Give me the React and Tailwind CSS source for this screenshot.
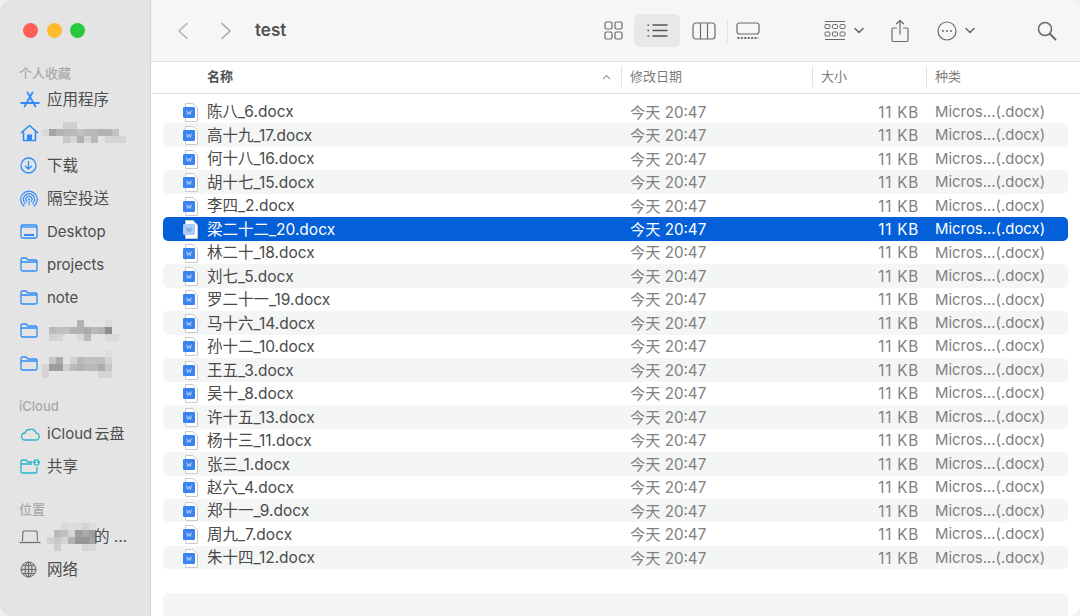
const FONT = "font-['Inter','Noto_Sans_CJK_SC',sans-serif]";

const files = [
  "陈八_6.docx", "高十九_17.docx", "何十八_16.docx", "胡十七_15.docx", "李四_2.docx",
  "梁二十二_20.docx", "林二十_18.docx", "刘七_5.docx", "罗二十一_19.docx", "马十六_14.docx",
  "孙十二_10.docx", "王五_3.docx", "吴十_8.docx", "许十五_13.docx", "杨十三_11.docx",
  "张三_1.docx", "赵六_4.docx", "郑十一_9.docx", "周九_7.docx", "朱十四_12.docx",
];

function FolderIcon() {
  return (
    <svg width="18" height="15" viewBox="0 0 18 15" fill="none" stroke="#2f8cf7" strokeWidth="1.3">
      <path d="M1 3.5 V2.5 A1.5 1.5 0 0 1 2.5 1 H6 L8 3 H15.5 A1.5 1.5 0 0 1 17 4.5 V12.5 A1.5 1.5 0 0 1 15.5 14 H2.5 A1.5 1.5 0 0 1 1 12.5 Z M1 5 H17" />
    </svg>
  );
}

// redacted names in the sidebar, [col, row, opacity] on a 7px grid
function Mosaic({ cells, w, h, className = "" }) {
  return (
    <svg className={className} width={w} height={h} viewBox={`0 0 ${w} ${h}`}>
      {cells.map(([x, y, o], i) => (
        <rect key={i} x={x * 7} y={y * 7} width="7" height="7" fill="#555" opacity={o} />
      ))}
    </svg>
  );
}

const mosaicHome = [
  [3,0,.15],[4,0,.15],
  [0,1,.08],[1,1,.45],[2,1,.35],[3,1,.3],[4,1,.3],[5,1,.25],[6,1,.3],[7,1,.3],[8,1,.35],[9,1,.35],[10,1,.25],
  [3,2,.2],[4,2,.1],[5,2,.35],[6,2,.1],[7,2,.3],[9,2,.1],[10,2,.12],[11,2,.1],
];
const mosaicFolderA = [
  [5,0,.35],[9,0,.06],
  [1,1,.3],[2,1,.25],[3,1,.25],[4,1,.35],[5,1,.35],[6,1,.4],[7,1,.3],[8,1,.35],[9,1,.6],
  [1,2,.12],[2,2,.1],[5,2,.08],[6,2,.3],[9,2,.08],[10,2,.08],
];
const mosaicFolderB = [
  [9,0,.04],
  [1,1,.2],[2,1,.4],[4,1,.12],[5,1,.3],[6,1,.25],[7,1,.25],[8,1,.25],[9,1,.12],
  [0,2,.1],[1,2,.5],[2,2,.5],[3,2,.15],[4,2,.3],[5,2,.35],[6,2,.3],[7,2,.3],[8,2,.4],[9,2,.2],
  [0,3,.1],[8,3,.1],[9,3,.1],
];
const mosaicLaptop = [
  [2,0,.08],[3,0,.05],[4,0,.05],[5,0,.12],[6,0,.05],
  [1,1,.3],[2,1,.25],[3,1,.1],[4,1,.5],[5,1,.4],[6,1,.5],
  [0,2,.12],[1,2,.2],[2,2,.1],[3,2,.35],[4,2,.55],[5,2,.55],[6,2,.45],
  [1,3,.15],[5,3,.1],[6,3,.08],
];

const Icons = {
  apps: (
    <svg width="20" height="17" viewBox="0 0 20 17" fill="none" stroke="#2f8cf7" strokeWidth="1.8" strokeLinecap="round">
      <path d="M7.5 1.5 L15.5 15.5 M12.5 1.5 L4.5 15.5 M1.2 12 H18.8" />
    </svg>
  ),
  home: (
    <svg width="19" height="18" viewBox="0 0 19 18" fill="none" stroke="#2f8cf7" strokeWidth="1.6" strokeLinejoin="round">
      <path d="M1 9 L9.5 1.5 L18 9 M3.5 7.5 V16.5 H15.5 V7.5" />
      <rect x="7" y="10.5" width="5" height="6" fill="#2f8cf7" stroke="none" />
    </svg>
  ),
  download: (
    <svg width="17" height="17" viewBox="0 0 17 17" fill="none" stroke="#2f8cf7" strokeWidth="1.3" strokeLinecap="round">
      <circle cx="8.5" cy="8.5" r="7.5" />
      <path d="M8.5 4.5 V12 M5.5 9.2 L8.5 12 L11.5 9.2" />
    </svg>
  ),
  airdrop: (
    <svg width="18" height="18" viewBox="0 0 18 18" fill="none" stroke="#2f8cf7" strokeWidth="1.2" strokeLinecap="round">
      <path d="M4 16 A8.3 8.3 0 1 1 14 16 M5.4 13.6 A5.6 5.6 0 1 1 12.6 13.6 M6.8 11.4 A3 3 0 1 1 11.2 11.4" />
      <circle cx="9" cy="9.3" r="1" fill="#2f8cf7" stroke="none" />
      <path d="M9 11 V15" strokeWidth="1" />
    </svg>
  ),
  desktop: (
    <svg width="18" height="15" viewBox="0 0 18 15" fill="none" stroke="#2f8cf7" strokeWidth="1.3">
      <rect x="1" y="1" width="16" height="13" rx="1.5" />
      <path d="M1 3 H17" />
      <path d="M4 11 H14" strokeWidth="2" />
    </svg>
  ),
  cloud: (
    <svg width="20" height="14" viewBox="0 0 20 14" fill="none" stroke="#25b5c9" strokeWidth="1.3">
      <path d="M5 13 H15.5 A3.5 3.5 0 0 0 16 6 A4.5 4.5 0 0 0 10 2.5 A5 5 0 0 0 5 6 A3.5 3.5 0 0 0 5 13 Z" />
    </svg>
  ),
  shared: (
    <svg width="20" height="15" viewBox="0 0 20 15" fill="none" stroke="#25b5c9" strokeWidth="1.3">
      <path d="M1 3 V2.5 A1.5 1.5 0 0 1 2.5 1 H6 L8 3 H12.5 M17 8 V12.5 A1.5 1.5 0 0 1 15.5 14 H2.5 A1.5 1.5 0 0 1 1 12.5 V3 M1 5 H12" />
      <circle cx="16.5" cy="3.5" r="3.2" fill="#25b5c9" stroke="none" />
      <circle cx="16.5" cy="2.6" r="1" fill="#fff" stroke="none" />
      <rect x="15" y="4" width="3" height="1.3" fill="#fff" stroke="none" />
    </svg>
  ),
  laptop: (
    <svg width="22" height="14" viewBox="0 0 22 14" fill="none" stroke="#6f6f6f" strokeWidth="1.1">
      <path d="M3.5 11 L4 1.5 A.7 .7 0 0 1 4.7 1 H17.3 A.7 .7 0 0 1 18 1.5 L18.5 11" />
      <path d="M.5 12.5 H21.5" strokeWidth="1.3" />
    </svg>
  ),
  globe: (
    <svg width="17" height="17" viewBox="0 0 17 17" fill="#9a9a9a" stroke="#6a6a6a" strokeWidth="1">
      <circle cx="8.5" cy="8.5" r="7.5" fillOpacity="0.3" />
      <ellipse cx="8.5" cy="8.5" rx="3.5" ry="7.5" fill="none" />
      <path d="M1 8.5 H16 M2.5 4.5 H14.5 M2.5 12.5 H14.5 M8.5 1 V16" fill="none" />
    </svg>
  ),
};

function SideItem({ icon, label, children, className = "" }) {
  const latin = /^[a-zA-Z]/.test(label || "");
  return (
    <div className={`flex h-[33px] items-center pl-[20px] ${className}`}>
      <span className="flex w-[27px] shrink-0 items-center">{icon}</span>
      {label && (
        <span className={`${latin ? "text-[15px]" : "text-[15.5px]"} leading-none text-[#4d4d4d] [word-spacing:-2px]`}>
          {label}
        </span>
      )}
      {children}
    </div>
  );
}

function SideTitle({ children, className = "" }) {
  return <div className={`pl-[19px] text-[13px] font-medium leading-none text-[#a9a9a9] ${className}`}>{children}</div>;
}

function Sidebar() {
  return (
    <aside className="flex h-full w-[151px] shrink-0 flex-col rounded-l-[11px] border-r border-[#d4d4d4] bg-[#e4e4e4]">
      <div className="flex gap-[8.5px] pl-[23px] pt-[23px]">
        <span className="size-[15px] rounded-full bg-[#fe5f57]" />
        <span className="size-[15px] rounded-full bg-[#febb2e]" />
        <span className="size-[15px] rounded-full bg-[#29c83f]" />
      </div>
      <SideTitle className="mt-[29px]">个人收藏</SideTitle>
      <div className="mt-[3px]">
        <SideItem icon={Icons.apps} label="应用程序" />
        <SideItem icon={Icons.home}>
          <Mosaic className="-ml-[5px]" cells={mosaicHome} w={84} h={21} />
        </SideItem>
        <SideItem icon={Icons.download} label="下载" />
        <SideItem icon={Icons.airdrop} label="隔空投送" />
        <SideItem icon={Icons.desktop} label="Desktop" />
        <SideItem icon={<FolderIcon />} label="projects" />
        <SideItem icon={<FolderIcon />} label="note" />
        <SideItem icon={<FolderIcon />}>
          <Mosaic className="-ml-[5px]" cells={mosaicFolderA} w={84} h={21} />
        </SideItem>
        <SideItem icon={<FolderIcon />}>
          <Mosaic className="-ml-[5px]" cells={mosaicFolderB} w={84} h={28} />
        </SideItem>
      </div>
      <SideTitle className="mt-[20px]">iCloud</SideTitle>
      <div className="mt-[4px]">
        <SideItem icon={Icons.cloud} label="iCloud 云盘" />
        <SideItem icon={Icons.shared} label="共享" />
      </div>
      <SideTitle className="mt-[20px]">位置</SideTitle>
      <div className="mt-[4px]">
        <SideItem icon={Icons.laptop} className="!pl-[19px]">
          <Mosaic cells={mosaicLaptop} w={49} h={28} className="ml-px" />
          <span className="-ml-[2px] text-[15.5px] leading-none text-[#4d4d4d]">的 ...</span>
        </SideItem>
        <SideItem icon={Icons.globe} label="网络" />
      </div>
    </aside>
  );
}

function Toolbar() {
  return (
    <div className="flex h-[62px] shrink-0 items-center border-b border-[#dfdfdf] bg-[#f6f6f6]">
      <svg className="ml-[26px]" width="12" height="18" viewBox="0 0 12 18" fill="none" stroke="#b4b4b4" strokeWidth="1.6" strokeLinecap="round" strokeLinejoin="round">
        <path d="M10 1.5 L2 9 L10 16.5" />
      </svg>
      <svg className="ml-[31px]" width="12" height="18" viewBox="0 0 12 18" fill="none" stroke="#a8a8a8" strokeWidth="1.6" strokeLinecap="round" strokeLinejoin="round">
        <path d="M2 1.5 L10 9 L2 16.5" />
      </svg>
      <span className="ml-[23px] text-[17px] font-semibold leading-none text-[#515151]">test</span>

      <div className="ml-[318px] flex items-center">
        <svg width="19" height="19" viewBox="0 0 19 19" fill="none" stroke="#6a6a6a" strokeWidth="1.2">
          <rect x="1" y="1" width="7" height="7" rx="1.5" />
          <rect x="11" y="1" width="7" height="7" rx="1.5" />
          <rect x="1" y="11" width="7" height="7" rx="1.5" />
          <rect x="11" y="11" width="7" height="7" rx="1.5" />
        </svg>
        <div className="ml-[11px] flex h-[33px] w-[46px] items-center justify-center rounded-[6px] bg-[#e8e8e8]">
          <svg width="21" height="15" viewBox="0 0 21 15" fill="none" stroke="#555" strokeWidth="1.4" strokeLinecap="round">
            <path d="M1 2 H1.5 M1 7.5 H1.5 M1 13 H1.5 M6 2 H20 M6 7.5 H20 M6 13 H20" />
          </svg>
        </div>
        <svg className="ml-[12px]" width="24" height="18" viewBox="0 0 24 18" fill="none" stroke="#6a6a6a" strokeWidth="1.2">
          <rect x="1" y="1" width="22" height="16" rx="3" />
          <path d="M8.5 1 V17 M15.5 1 V17" />
        </svg>
        <span className="ml-[11px] h-[24px] w-px bg-[#e2e2e2]" />
        <svg className="ml-[8px]" width="24" height="18" viewBox="0 0 24 18" fill="none" stroke="#6a6a6a" strokeWidth="1.2">
          <rect x="1" y="1" width="22" height="11" rx="2.5" />
          <path d="M1.5 16 H22.5" strokeWidth="2" strokeDasharray="2 1.4" />
        </svg>
      </div>

      <svg className="ml-[64px]" width="22" height="21" viewBox="0 0 22 21" fill="none" stroke="#6a6a6a" strokeWidth="1">
        <path d="M1 1.5 H21 M1 19.5 H21" />
        <rect x="1" y="4.5" width="5" height="4" rx="1" />
        <rect x="8.5" y="4.5" width="5" height="4" rx="1" />
        <rect x="16" y="4.5" width="5" height="4" rx="1" />
        <rect x="1" y="12" width="5" height="4" rx="1" />
        <rect x="8.5" y="12" width="5" height="4" rx="1" />
        <rect x="16" y="12" width="5" height="4" rx="1" />
      </svg>
      <svg className="ml-[8px]" width="10" height="7" viewBox="0 0 10 7" fill="none" stroke="#666" strokeWidth="1.5" strokeLinecap="round" strokeLinejoin="round">
        <path d="M1 1.5 L5 5.5 L9 1.5" />
      </svg>
      <svg className="ml-[27px]" width="18" height="24" viewBox="0 0 18 24" fill="none" stroke="#6a6a6a" strokeWidth="1.2" strokeLinecap="round" strokeLinejoin="round">
        <path d="M5.5 9 H2.5 A1.5 1.5 0 0 0 1 10.5 V21 A1.5 1.5 0 0 0 2.5 22.5 H15.5 A1.5 1.5 0 0 0 17 21 V10.5 A1.5 1.5 0 0 0 15.5 9 H12.5 M9 15 V1.5 M5.5 4.8 L9 1.5 L12.5 4.8" />
      </svg>
      <svg className="ml-[28px]" width="20" height="20" viewBox="0 0 20 20" fill="none" stroke="#6a6a6a" strokeWidth="1.2">
        <circle cx="10" cy="10" r="9" />
        <circle cx="6" cy="10" r="1" fill="#6a6a6a" stroke="none" />
        <circle cx="10" cy="10" r="1" fill="#6a6a6a" stroke="none" />
        <circle cx="14" cy="10" r="1" fill="#6a6a6a" stroke="none" />
      </svg>
      <svg className="ml-[8px]" width="10" height="7" viewBox="0 0 10 7" fill="none" stroke="#666" strokeWidth="1.5" strokeLinecap="round" strokeLinejoin="round">
        <path d="M1 1.5 L5 5.5 L9 1.5" />
      </svg>
      <svg className="ml-[62px]" width="20" height="20" viewBox="0 0 20 20" fill="none" stroke="#6a6a6a" strokeWidth="1.5" strokeLinecap="round">
        <circle cx="8" cy="8" r="6.5" />
        <path d="M13 13 L18.5 18.5" strokeWidth="1.9" />
      </svg>
    </div>
  );
}

function HeaderRow() {
  return (
    <div className="flex h-[32px] shrink-0 items-center border-b border-[#dfdfdf] bg-white pb-[2px] text-[13px] leading-none text-[#7c7c7c]">
      <span className="ml-[56px] w-[395px] font-semibold text-[#4f4f4f]">名称</span>
      <svg width="9" height="6" viewBox="0 0 9 6" fill="none" stroke="#9a9a9a" strokeWidth="1.1">
        <path d="M1 5 L4.5 1.5 L8 5" />
      </svg>
      <span className="ml-[10px] h-[21px] w-px bg-[#e3e3e3]" />
      <span className="ml-[8px] w-[182px]">修改日期</span>
      <span className="h-[21px] w-px bg-[#e3e3e3]" />
      <span className="ml-[8px] w-[105px]">大小</span>
      <span className="h-[21px] w-px bg-[#e3e3e3]" />
      <span className="ml-[8px]">种类</span>
    </div>
  );
}

function DocIcon({ selected }) {
  return (
    <svg width="17" height="19" viewBox="0 0 17 19" className="shrink-0">
      <path d="M3.5 .5 H11 L15.5 5 V18 A.5 .5 0 0 1 15 18.5 H4 A.5 .5 0 0 1 3.5 18 Z" fill="#fff" stroke="#c9c9c9" strokeWidth="1" />
      <rect x="1" y="4" width="12" height="11" rx="1.2" fill={selected ? "#a9cdf7" : "#3a82ee"} />
      <path d="M4.6 7.5 L5.7 11.5 L7 8.6 L8.3 11.5 L9.4 7.5" fill="none" stroke={selected ? "#5d93da" : "#cfe1fb"} strokeWidth=".8" />
    </svg>
  );
}

function FileRow({ name, index }) {
  const selected = name.startsWith("梁");
  const striped = index % 2 === 1 && !selected;
  const muted = selected ? "" : "text-[#808080]";
  return (
    <div
      className={`flex h-[23.47px] items-center rounded-[5px] pt-[1px] leading-none ${
        selected ? "bg-[#0460d9] text-white" : striped ? "bg-[#f4f5f5]" : ""
      }`}
    >
      <span className="ml-[19px] flex w-[25px] shrink-0 items-center">
        <DocIcon selected={selected} />
      </span>
      <span className={`w-[423px] text-[15.5px] ${selected ? "" : "text-[#4a4a4a]"}`}>{name}</span>
      <span className={`w-[150px] text-[15.2px] ${muted}`}>今天 20:47</span>
      <span className={`w-[139px] text-right text-[15.2px] tracking-[.8px] ${muted}`}>11 KB</span>
      <span className={`ml-[16px] text-[14.9px] ${muted}`}>Micros...(.docx)</span>
    </div>
  );
}

export default function App() {
  return (
    <div className={`flex h-[616px] w-[1080px] overflow-hidden bg-[#f2f2f2] ${FONT}`}>
      <Sidebar />
      <main className="flex min-w-0 flex-1 flex-col overflow-hidden rounded-r-[11px] bg-white">
        <Toolbar />
        <HeaderRow />
        <div className="flex flex-col px-[12px] pt-[6px]">
          {files.map((name, i) => (
            <FileRow key={name} name={name} index={i} />
          ))}
          <div className="mt-[24px] h-[24px] rounded-t-[5px] bg-[#f4f5f5]" />
        </div>
      </main>
    </div>
  );
}
